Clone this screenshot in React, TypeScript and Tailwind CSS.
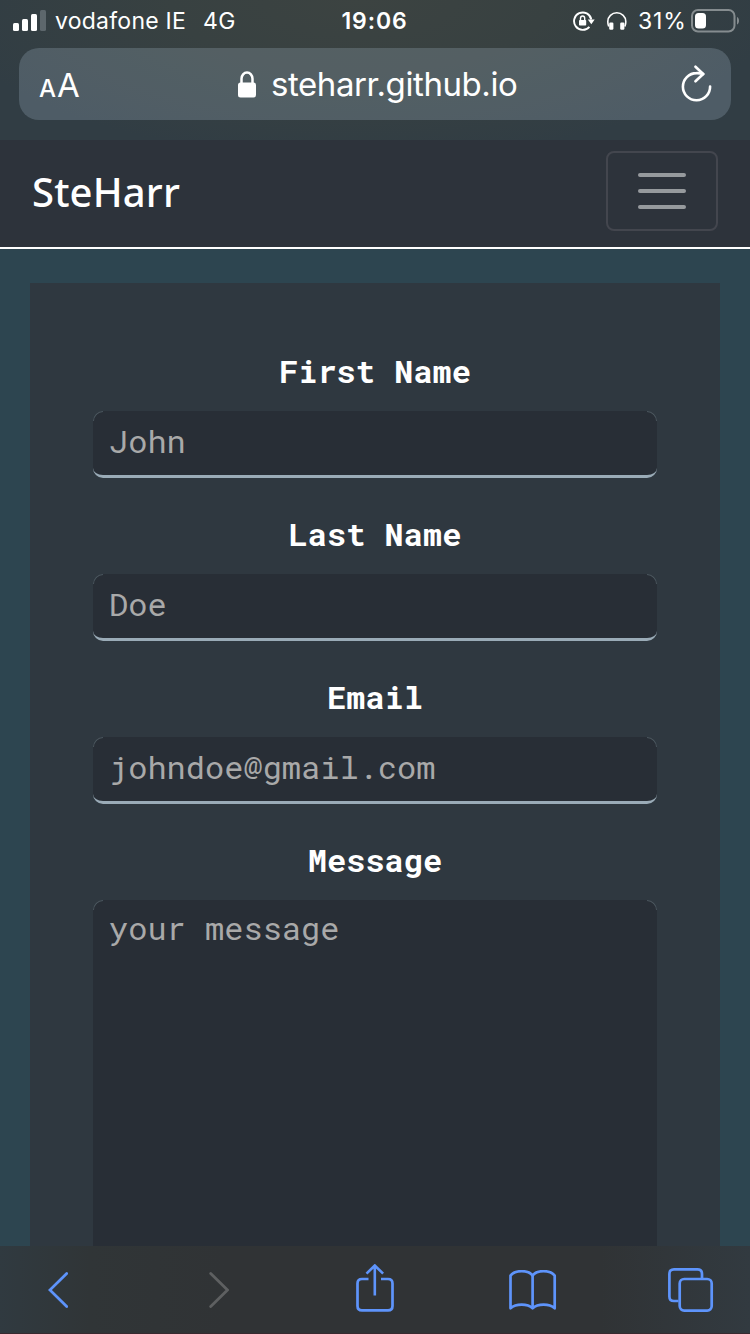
import React from "react";

function SignalIcon() {
  return (
    <svg width="33" height="21" viewBox="0 0 33 21" fill="#fff" className="shrink-0">
      <rect x="0" y="13" width="6" height="8" rx="1.5" />
      <rect x="9" y="9" width="6" height="12" rx="1.5" />
      <rect x="18" y="4" width="6" height="17" rx="1.5" />
      <rect x="27" y="0" width="6" height="21" rx="1.5" fill="#5d676c" />
    </svg>
  );
}

function RotationLockIcon() {
  return (
    <svg width="22" height="20" viewBox="0 0 22 20" fill="none" className="shrink-0">
      <path d="M16.400 15.800a8.700 8.700 0 1 1 1.900-7.300" stroke="#fff" strokeWidth="1.900" />
      <path d="M14.800 8.500h6.900L18.300 13.200z" fill="#fff" />
      <rect x="6" y="9" width="7.200" height="5.600" rx="0.8" fill="#fff" />
      <path d="M7.500 9.500V7.200a2.100 2.200 0 0 1 4.200 0v2.300" stroke="#fff" strokeWidth="1.400" />
    </svg>
  );
}

function HeadphonesIcon() {
  return (
    <svg width="20" height="18" viewBox="0 0 20 18" fill="none" className="shrink-0">
      <path d="M1.700 14.500C.8 12.500.8 10.800.8 9.500a9 8.700 0 0 1 18 0c0 1.300 0 3-.9 5" stroke="#fff" strokeWidth="1.600" />
      <rect x="2.200" y="10.500" width="4.200" height="7.300" rx="1.200" fill="#fff" />
      <rect x="13.200" y="10.500" width="4.200" height="7.300" rx="1.200" fill="#fff" />
    </svg>
  );
}

function BatteryIcon() {
  return (
    <svg width="49" height="24" viewBox="0 0 49 24" fill="none" className="shrink-0">
      <rect x="1" y="1" width="42.500" height="21.500" rx="6" stroke="#858c8f" strokeWidth="2" />
      <rect x="4" y="4" width="11" height="15.500" rx="3.500" fill="#fff" />
      <path d="M46 8c1.400.6 2 2 2 3.700s-.6 3.200-2 3.800z" fill="#858c8f" />
    </svg>
  );
}

function PadlockIcon() {
  return (
    <svg width="18" height="27" viewBox="0 0 18 27" fill="none" className="shrink-0">
      <rect x="0" y="11.500" width="18" height="15" rx="2.500" fill="#fff" />
      <path d="M3.500 12.500V7.800a5.500 6.300 0 0 1 11 0v4.700" stroke="#fff" strokeWidth="2.500" />
    </svg>
  );
}

function ReloadIcon() {
  return (
    <svg width="32" height="38" viewBox="0 0 32 38" fill="none" stroke="#fff" strokeWidth="2.600" strokeLinecap="round" strokeLinejoin="round" className="shrink-0">
      <path d="M29.100 21.500A13.600 13.600 0 1 1 15.500 8.100Q19 8 22.200 9" />
      <path d="M14.500 1.700 22.200 9 14.500 16.300" />
    </svg>
  );
}

function BackIcon() {
  return (
    <svg width="20" height="36" viewBox="0 0 20 36" fill="none" stroke="#5e94fb" strokeWidth="2.800" strokeLinecap="round">
      <path d="M18.700 1.500 1.900 18l16.800 16.500" />
    </svg>
  );
}

function ForwardIcon() {
  return (
    <svg width="20" height="36" viewBox="0 0 20 36" fill="none" stroke="#5e6061" strokeWidth="2.800" strokeLinecap="round">
      <path d="M1.700 1.500 18.500 18 1.700 34.500" />
    </svg>
  );
}

function ShareIcon() {
  return (
    <svg width="38" height="48" viewBox="0 0 38 48" fill="none" stroke="#5e94fb" strokeWidth="2.700">
      <path d="M12.500 15H6q-4.500 0-4.500 4.500V42q0 4.400 4.500 4.400h26q4.500 0 4.500-4.400V19.500Q36.500 15 32 15h-7" />
      <path d="M18.800 31.500V2M10.500 9.600 18.800 1.500l8.300 8.100" strokeWidth="2.600" />
    </svg>
  );
}

function BookIcon() {
  return (
    <svg width="48" height="40" viewBox="0 0 48 40" fill="none" stroke="#5e94fb" strokeWidth="2.700" strokeLinejoin="round">
      <path d="M23.600 5.600C19.500-.3 6-.3 1.500 5.600V38.300c5.500-4.900 17-4.900 22.100 0 5.200-4.900 16.700-4.900 22.100 0V5.600C41.200-.3 27.700-.3 23.600 5.600z" />
      <path d="M23.600 5.600v32" />
    </svg>
  );
}

function TabsIcon() {
  return (
    <svg width="46" height="44" viewBox="0 0 46 44" fill="none" stroke="#5e94fb" strokeWidth="2.700">
      <path d="M10.500 33H6q-4.600 0-4.600-4.600V6Q1.400 1.400 6 1.400h23.500Q34 1.400 34 6v4" />
      <rect x="11.700" y="11" width="32" height="31.600" rx="4.500" />
    </svg>
  );
}

function StatusBar() {
  return (
    <div className="grid h-12 grid-cols-[300px_149px_301px] pb-2 text-[23px] leading-[40px] text-white">
      <div className="flex items-center pl-[13px]">
        <SignalIcon />
        <span className="ml-[9px] w-[148px] whitespace-nowrap pt-px tracking-[0.25px]">vodafone IE</span>
        <span className="whitespace-nowrap pt-px tracking-[0.3px]">4G</span>
      </div>
      <div className="pt-px text-center font-semibold tracking-[0.9px]">19:06</div>
      <div className="flex items-center justify-end pr-[10px]">
        <RotationLockIcon />
        <span className="w-3" />
        <HeadphonesIcon />
        <span className="ml-[11px] w-[53px] whitespace-nowrap pt-px tracking-[0.8px]">31%</span>
        <BatteryIcon />
      </div>
    </div>
  );
}

function AddressBar() {
  return (
    <div className="mx-[19px] flex h-[72px] items-center rounded-[20px] bg-[#a6bacb]/25 text-white">
      <div className="flex w-[219px] items-baseline gap-[1px] pl-[20px] pt-[3px]">
        <span className="text-[24px] font-medium">A</span>
        <span className="text-[33px]">A</span>
      </div>
      <PadlockIcon />
      <span className="ml-[15px] flex-1 whitespace-nowrap text-[33px] leading-[72px] tracking-[-0.42px]">steharr.github.io</span>
      <div className="mr-[18px]">
        <ReloadIcon />
      </div>
    </div>
  );
}

function Navbar() {
  return (
    <nav className="flex h-[109px] shrink-0 items-center justify-between border-b-2 border-white bg-[#2d333b] px-8">
      <span className="pb-[3px] font-['Noto_Sans','Open_Sans',sans-serif] text-[40px] font-medium leading-[60px] tracking-[0.15px] text-white">SteHarr</span>
      <button aria-label="Menu" className="mb-[5px] flex h-20 w-28 flex-col items-center justify-center gap-3 rounded-lg border-2 border-[#43464e]">
        <span className="h-1 w-12 rounded-full bg-[#969a9d]" />
        <span className="h-1 w-12 rounded-full bg-[#969a9d]" />
        <span className="h-1 w-12 rounded-full bg-[#969a9d]" />
      </button>
    </nav>
  );
}

function CornerEdges() {
  return (
    <>
      <span className="absolute left-0 top-0 size-[10px] rounded-tl-[10px] border-l border-t border-[#4b575f]" />
      <span className="absolute right-0 top-0 size-[10px] rounded-tr-[10px] border-r border-t border-[#4b575f]" />
    </>
  );
}

function Field({ label, placeholder }: { label: string; placeholder: string }) {
  return (
    <label className="mb-[33px] block">
      <span className="mb-[15px] block h-12 text-center font-bold leading-[46px] text-white">{label}</span>
      <span className="relative block">
        <input
          placeholder={placeholder}
          className="block h-[67px] w-full rounded-[10px] border-b-[3px] border-[#9aabb7] bg-[#282e36] px-4 pb-[5px] placeholder:text-[#a9a9a9] placeholder:opacity-100"
        />
        <CornerEdges />
      </span>
    </label>
  );
}

function ContactForm() {
  return (
    <form className="h-[1200px] bg-[#2f3840] px-[63px] pt-[65px] font-['Roboto_Mono','DejaVu_Sans_Mono',monospace] text-[32px]">
      <Field label="First Name" placeholder="John" />
      <Field label="Last Name" placeholder="Doe" />
      <Field label="Email" placeholder="johndoe@gmail.com" />
      <label className="block">
        <span className="mb-[15px] block h-12 text-center font-bold leading-[46px] text-white">Message</span>
        <span className="relative block">
          <textarea
            placeholder="your message"
            className="block h-[480px] w-full resize-none rounded-[10px] border-b-[3px] border-[#9aabb7] bg-[#282e36] px-4 py-[4px] leading-[48px] placeholder:text-[#a9a9a9] placeholder:opacity-100"
          />
          <CornerEdges />
        </span>
      </label>
    </form>
  );
}

function Toolbar() {
  return (
    <div className="flex h-[88px] shrink-0 items-center border-b border-[#38292f] bg-[linear-gradient(to_right,#303a40_0%,#303537_12%,#303335_30%,#303335_80%,#323a40_100%)] pl-12 pr-9 pt-px">
      <BackIcon />
      <span className="w-[141px]" />
      <ForwardIcon />
      <span className="w-[127px]" />
      <div className="-mt-[4px]"><ShareIcon /></div>
      <span className="w-[115px]" />
      <BookIcon />
      <span className="w-[111px]" />
      <TabsIcon />
    </div>
  );
}

export default function App() {
  return (
    <div className="flex h-[1334px] w-[750px] flex-col overflow-hidden bg-[#2d4550] font-['Inter',sans-serif]">
      <header className="h-[140px] shrink-0 bg-[radial-gradient(ellipse_420px_160px_at_48%_0%,#3c4341_0%,#384141_45%,#313d44_100%)]">
        <StatusBar />
        <AddressBar />
      </header>
      <Navbar />
      <main className="min-h-0 flex-1 overflow-hidden px-[30px] pt-[34px]">
        <ContactForm />
      </main>
      <Toolbar />
    </div>
  );
}
